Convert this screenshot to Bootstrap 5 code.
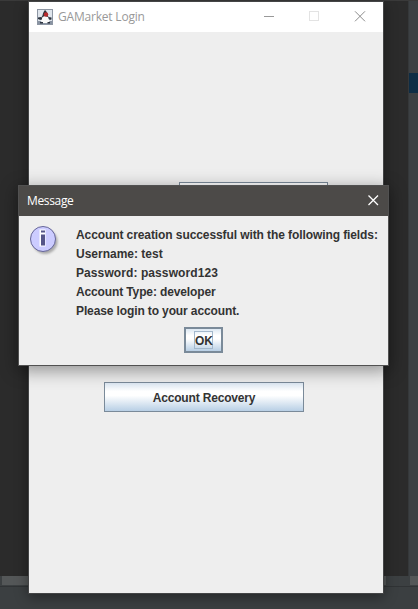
<!DOCTYPE html>
<html lang="en">
<head>
<meta charset="utf-8">
<meta name="viewport" content="width=device-width, initial-scale=1">
<title>GAMarket Login</title>
<link href="https://cdn.jsdelivr.net/npm/bootstrap@5.3.0/dist/css/bootstrap.min.css" rel="stylesheet">
<style>
body{background:#2b2b2b;font-family:"Liberation Sans",Arial,sans-serif;font-size:12px;color:#333}
.desktop{width:418px;height:609px}
.top-edge{height:1px;background:#3a3a3a}
.side-strip{width:10px;background:#3c4043;border-left:1px solid #35383a}
.side-mark{height:20px;margin-top:72px;background:#0e2d45}
.scroll-row{height:10px;padding-left:2px;background:#3c4042}
.scroll-thumb{height:9px;background:#545758}
.thumb-wide{width:384px}
.thumb-small{width:8px}
.status-strip{height:23px;background:#3b3f41;border-top:1px solid #303335}
.app-window{left:29px;top:2px;width:354px;height:591px;background:#eee;box-shadow:0 0 0 1px #444546,0 3px 12px 1px rgba(0,0,0,.4)}
.title-bar{height:30px;background:#fff;font-family:"Open Sans","Segoe UI",sans-serif;color:#999}
.title-text{font-size:12px;line-height:30px;white-space:nowrap}
.app-title{margin-left:5px;letter-spacing:-.2px}
.msg-caption{letter-spacing:-.35px}
.login-field{width:149px;height:24px;margin:150px 0 0 150px;border:1px solid #7a8a99;background:#fff}
.swing-btn{border:1px solid #7a8a99;border-radius:0;background:linear-gradient(#dde8f3 0,#fff 30%,#fff 45%,#b8cfe5 100%);color:#333;font-size:12px;font-weight:700;padding:0}
.recovery-btn{width:200px;height:30px;margin:176px 0 0 75px;letter-spacing:-.17px;padding-top:1px}
.msg-dialog{left:18px;top:185px;width:371px;height:181px;background:#eee;border:1px solid #515151;box-shadow:0 4px 16px 1px rgba(0,0,0,.38)}
.msg-title{height:30px;background:#4c4a48;color:#fff;font-family:"Open Sans","Segoe UI",sans-serif}
.msg-body{padding:9px 0 0 10px}
.msg-lines{margin:1px 0 0 17px;font-weight:700;line-height:19px;white-space:nowrap}
.line-intro{letter-spacing:-.09px}
.line-pass{letter-spacing:.09px}
.line-type{letter-spacing:-.13px}
.line-login{letter-spacing:-.12px}
.ok-btn{width:39px;height:26px;border-width:2px;margin:6px 0 0 165px}
.ok-focus{width:19px;height:18px;border:1px solid #a3b8cc;line-height:18px}
</style>
<script src="https://cdn.jsdelivr.net/npm/bootstrap@5.3.0/dist/js/bootstrap.bundle.min.js"></script>
</head>
<body class="overflow-hidden">
<div class="desktop position-relative overflow-hidden d-flex flex-column">
  <div class="top-edge"></div>
  <div class="d-flex flex-grow-1">
    <div class="flex-grow-1"></div>
    <div class="side-strip"><div class="side-mark"></div></div>
  </div>
  <div class="scroll-row d-flex justify-content-between"><div class="scroll-thumb thumb-wide"></div><div class="scroll-thumb thumb-small"></div></div>
  <div class="status-strip"></div>

  <main class="app-window position-absolute d-flex flex-column">
    <header class="title-bar d-flex align-items-center ps-2">
      <svg width="16" height="16" viewBox="0 0 16 16" aria-hidden="true">
        <rect x=".5" y=".5" width="15" height="15" fill="#dfe5ec" stroke="#8d96a3"/>
        <path d="M1 12h14v3H1z" fill="#8893a2"/>
        <path d="M8 1C6.500 2.500 6 4 5.500 6.500L4 9v2h8V9l-1-2C10.500 4 9.500 2 8 1z" fill="#30343c"/>
        <path d="M5.500 8L8 7l3 1 1.500 4-1 2H5l-1-2z" fill="#fafafa"/>
        <circle cx="9" cy="5.500" r="2.200" fill="#b52a2d"/>
        <path d="M1 8.500L4 8l1 1.500L3.500 11 1 10zM11.500 8l3 .5v2l-2 .5zM3 13h3v1.500H3zM10.500 13H13v1.500h-2.500z" fill="#2c333e"/>
      </svg>
      <span class="title-text app-title">GAMarket Login</span>
      <svg class="ms-auto" width="120" height="30" viewBox="0 0 120 30" fill="none" aria-hidden="true">
        <path d="M1 14.500h10" stroke="#999"/>
        <rect x="46.500" y="9.500" width="9" height="9" stroke="#e3e3e3"/>
        <path d="M92 9.300l10 10M102 9.300l-10 10" stroke="#8c8c8c"/>
      </svg>
    </header>
    <div class="login-field"></div>
    <button class="btn swing-btn recovery-btn" type="button">Account Recovery</button>
  </main>

  <section class="msg-dialog position-absolute" role="dialog" aria-label="Message">
    <header class="msg-title d-flex align-items-center justify-content-between ps-2">
      <span class="title-text msg-caption">Message</span>
      <svg width="24" height="30" viewBox="0 0 24 30" aria-hidden="true"><path d="M4.500 9.500l9.500 9.500M14 9.500L4.500 19" stroke="#fff" stroke-width="1.300"/></svg>
    </header>
    <div class="msg-body d-flex">
      <svg width="30" height="32" viewBox="0 0 30 32" aria-hidden="true">
        <defs><filter id="soft" x="-20%" y="-20%" width="150%" height="150%"><feGaussianBlur stdDeviation="1.200"/></filter></defs>
        <circle cx="16" cy="16.500" r="12.500" fill="#aaa" filter="url(#soft)"/>
        <circle cx="14" cy="14" r="12.500" fill="#ccf" stroke="#666699"/>
        <path d="M10.500 4.500h6v4h-6zM10.500 8.500h6v13h-6z" fill="#fff"/>
        <path d="M12 5.500h4v2h-4zM12 9.500h4v11h-4z" fill="#555588"/>
      </svg>
      <div class="msg-lines">
        <div class="line-intro">Account creation successful with the following fields:</div>
        <div>Username: test</div>
        <div class="line-pass">Password: password123</div>
        <div class="line-type">Account Type: developer</div>
        <div class="line-login">Please login to your account.</div>
      </div>
    </div>
    <button class="btn swing-btn ok-btn d-flex align-items-center justify-content-center" type="button"><span class="ok-focus">OK</span></button>
  </section>
</div>
</body>
</html>
